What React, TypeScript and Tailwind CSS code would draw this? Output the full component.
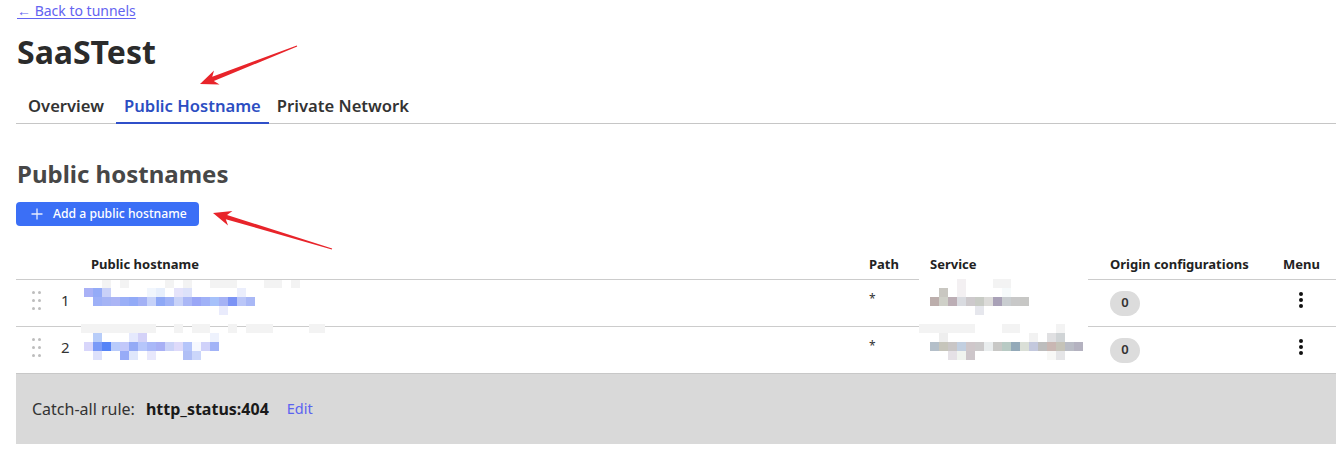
import React from "react";

type Cell = [number, number, number, number, string];

const FAINT = "#f3f3f3";

function cells(level: number, y0: number, h: number, xOff: number, list: [number, string][]): Cell[] {
  return list.map(([c, col]) => [xOff + c * 9, y0, 9, h, col]);
}

const host1: Cell[] = [
  ...cells(0, 0, 8, 0, [[2, FAINT], [4, FAINT], [9, FAINT], [11, FAINT], [14, FAINT], [15, FAINT], [16, FAINT], [20, FAINT], [21, FAINT], [23, FAINT]]),
  ...cells(1, 8, 9, 0, [[0, "#a9b1f6"], [1, "#94abf7"], [2, "#c9d1f8"], [7, "#f1f6fd"], [8, "#e7effc"], [10, "#e5e3fa"], [11, "#dde2fa"], [17, "#ebeefc"]]),
  ...cells(2, 17, 9, 0, [
    [1, "#9db0f7"], [2, "#a5b4f5"], [3, "#abb5f5"], [4, "#9aaff7"], [5, "#92aaf7"], [6, "#a3b1f5"], [7, "#c6d2f9"], [8, "#8ea8f6"], [9, "#a0b3f6"],
    [10, "#c8d2f8"], [11, "#aab7f6"], [12, "#99a6f6"], [13, "#a0b1f7"], [14, "#a6c1fa"], [15, "#a5b2f5"], [16, "#7b93f5"], [17, "#bac6f8"], [18, "#a9b8f6"],
  ]),
  ...cells(3, 26, 9, 0, [[15, "#e9ebfc"]]),
];

const host2: Cell[] = [
  [0, 0, 75, 9, FAINT], [93, 0, 9, 9, FAINT], [111, 0, 18, 9, FAINT], [147, 0, 9, 9, FAINT], [165, 0, 27, 9, FAINT], [228, 0, 16, 9, FAINT],
  ...cells(1, 9, 9, 3, [[1, "#b8cdf9"], [5, "#e5e9fd"], [6, "#d4d2f8"], [14, "#eef2fd"]]),
  ...cells(2, 18, 9, 3, [
    [0, "#d8d6fb"], [1, "#7a9af8"], [2, "#5684f7"], [3, "#b8cbfb"], [4, "#c2c8fa"], [5, "#94aaf6"], [6, "#b6c6fb"], [7, "#a9b8f8"],
    [8, "#a8b0f5"], [9, "#cbd3f8"], [10, "#dedafa"], [11, "#b5c5fa"], [12, "#f6f8fe"], [13, "#d0d2fa"], [14, "#a2b3f7"],
  ]),
  ...cells(3, 27, 9, 3, [[1, "#dde1fb"], [4, "#97abf7"], [5, "#dfe7fc"], [7, "#e8e8fc"], [11, "#b0bff6"], [12, "#cbd6fa"]]),
];

const serv1: Cell[] = [
  [0, 0, 169, 4, "#ffffff"],
  ...cells(0, 1, 9, 11, [[3, "#f3f0f2"], [7, FAINT], [8, FAINT]]),
  ...cells(1, 10, 9, 11, [[1, "#c9c7c1"], [3, "#f3f0f2"], [8, "#f6fafb"]]),
  ...cells(2, 19, 9, 11, [
    [0, "#bcaeac"], [1, "#cfd0c8"], [2, "#bcaeb5"], [3, "#d9dbe0"], [4, "#cdc9cc"], [5, "#c8cbc5"], [6, "#dcdbd9"], [7, "#a9a1b7"], [8, "#c9cdd0"], [9, "#c8c8c8"], [10, "#c7c7c5"],
  ]),
  ...cells(3, 28, 9, 11, [[5, "#e6e7ed"]]),
];

const serv2: Cell[] = [
  [0, 0, 169, 4, "#ffffff"],
  [0, 0, 56, 9, FAINT],
  ...cells(0, 0, 9, 11, [[8, FAINT], [9, FAINT], [14, FAINT]]),
  ...cells(1, 9, 9, 11, [[1, "#eeeeee"], [11, "#f2f2f2"], [13, "#e0e0e2"], [14, "#d0d4d6"]]),
  ...cells(2, 18, 9, 11, [
    [0, "#b4bfc9"], [1, "#c6c5bb"], [2, "#c9c6c6"], [3, "#c2cfe0"], [4, "#cfc7ca"], [5, "#cccacb"], [6, "#e9edee"], [7, "#c8c8c6"], [8, "#b8cac4"],
    [9, "#93a9b8"], [10, "#dadfd7"], [11, "#c3c8dd"], [12, "#bdbdbd"], [13, "#c9b7b3"], [14, "#c5c3b8"], [15, "#b9bcc5"], [16, "#b4b2c0"],
  ]),
  ...cells(3, 27, 9, 11, [[2, "#e5e1e6"], [3, "#f0f4ef"], [4, "#cdc6ca"], [13, "#f8f8f6"], [14, "#e5e5e7"]]),
];

function Mosaic({ data, w, h, className }: { data: Cell[]; w: number; h: number; className: string }) {
  return (
    <svg width={w} height={h} viewBox={`0 0 ${w} ${h}`} className={className} shapeRendering="crispEdges">
      {data.map(([x, y, cw, ch, c], i) => (
        <rect key={i} x={x} y={y} width={cw} height={ch} fill={c} />
      ))}
    </svg>
  );
}

function Arrow({ sx, sy, tx, ty }: { sx: number; sy: number; tx: number; ty: number }) {
  const dx = tx - sx;
  const dy = ty - sy;
  const len = Math.hypot(dx, dy);
  const ux = dx / len;
  const uy = dy / len;
  const nx = -uy;
  const ny = ux;
  const L = 18;
  const W = 7.5;
  const hx = tx - ux * L;
  const hy = ty - uy * L;
  const bx = tx - ux * (L - 4);
  const by = ty - uy * (L - 4);
  const pts = [
    [sx + nx * 0.6, sy + ny * 0.6],
    [bx + nx * 2.2, by + ny * 2.2],
    [hx + nx * W, hy + ny * W],
    [tx, ty],
    [hx - nx * W, hy - ny * W],
    [bx - nx * 2.2, by - ny * 2.2],
    [sx - nx * 0.6, sy - ny * 0.6],
  ]
    .map((p) => p.join(","))
    .join(" ");
  return <polygon points={pts} fill="#e8242a" />;
}

function Handle() {
  return (
    <div className="grid grid-cols-2 gap-x-[3px] gap-y-[5px] w-[9px] mb-[6px]">
      {Array.from({ length: 6 }).map((_, i) => (
        <div key={i} className="w-[3px] h-[3px] rounded-full bg-[#bdbdbd]" />
      ))}
    </div>
  );
}

function Kebab() {
  return (
    <div className="flex flex-col gap-[2.3px] mb-[6px]">
      <div className="w-[4px] h-[4px] rounded-full bg-[#111]" />
      <div className="w-[4px] h-[4px] rounded-full bg-[#111]" />
      <div className="w-[4px] h-[4px] rounded-full bg-[#111]" />
    </div>
  );
}

function Badge() {
  return (
    <div className="w-[30px] h-[25px] rounded-full bg-[#dcdcdc] flex items-center justify-center text-[13px] font-semibold text-[#333]">
      0
    </div>
  );
}

const grid = "grid grid-cols-[44px_24px_785px_61px_180px_173px_1fr]";

export default function App() {
  return (
    <div
      className="relative w-[1340px] h-[450px] bg-white overflow-hidden"
      style={{ fontFamily: '"Noto Sans", "Open Sans", sans-serif' }}
    >
      <div className="pl-[16px] pr-[4px]">
        <a href="#" className="block mt-[1px] text-[14px] leading-[20px] text-[#6363f1] underline underline-offset-[2px] pl-[1px] w-fit">
          ← Back to tunnels
        </a>
        <h1 className="mt-[11px] text-[32px] leading-[40px] font-bold text-[#2b2b2b] pl-[1px]">SaaSTest</h1>

        <div className="mt-[21px] flex border-b border-[#c6c6c6] pl-[4px]">
          <div className="px-[8px] pt-[1px] pb-[5px] text-[16.6px] leading-[24px] font-semibold text-[#333]">Overview</div>
          <div className="ml-[4px] px-[8px] pt-[1px] pb-[3px] mb-[-1px] border-b-2 border-[#2f4fc9] text-[16.6px] leading-[24px] font-semibold text-[#2c4ec2]">
            Public Hostname
          </div>
          <div className="px-[8px] pt-[1px] pb-[5px] text-[16.6px] leading-[24px] font-semibold text-[#333]">Private Network</div>
        </div>

        <h2 className="mt-[34px] text-[24px] leading-[32px] font-bold text-[#474747] pl-[1px]">Public hostnames</h2>

        <button className="mt-[12px] h-[24px] w-[183px] rounded-[4px] bg-[#3b6ff6] flex items-center pl-[15px] text-white text-[12.2px] font-medium">
          <svg width="12" height="12" viewBox="0 0 12 12" className="mr-[10px]">
            <path d="M6 0.5V11.5M0.5 6H11.5" stroke="#e6ecff" strokeWidth="1.3" />
          </svg>
          Add a public hostname
        </button>

        <div className="mt-[24px]">
          <div className={`${grid} h-[30px] items-center border-b border-[#cccccc] text-[13px] font-bold text-[#222]`}>
            <div />
            <div />
            <div className="pl-[7px]">Public hostname</div>
            <div>Path</div>
            <div>Service</div>
            <div>Origin configurations</div>
            <div>Menu</div>
          </div>

          <div className={`${grid} h-[47px] items-center border-b border-[#cccccc]`}>
            <div className="pl-[16px]"><Handle /></div>
            <div className="pl-[1px] text-[15px] text-[#333] mb-[6px]">1</div>
            <div className="self-start">
              <Mosaic data={host1} w={230} h={36} className="relative" />
            </div>
            <div className="text-[12px] text-[#333] mb-[8px]">*</div>
            <div className="self-start ml-[-11px] mt-[-2px]">
              <Mosaic data={serv1} w={169} h={38} className="relative" />
            </div>
            <div><Badge /></div>
            <div className="pl-[16px]"><Kebab /></div>
          </div>

          <div className={`${grid} h-[47px] items-center border-b border-[#c8c8c8]`}>
            <div className="pl-[16px]"><Handle /></div>
            <div className="pl-[1px] text-[15px] text-[#333] mb-[6px]">2</div>
            <div className="self-start ml-[-3px] mt-[-3px]">
              <Mosaic data={host2} w={250} h={36} className="relative" />
            </div>
            <div className="text-[12px] text-[#333] mb-[8px]">*</div>
            <div className="self-start ml-[-11px] mt-[-3px]">
              <Mosaic data={serv2} w={169} h={36} className="relative" />
            </div>
            <div><Badge /></div>
            <div className="pl-[16px]"><Kebab /></div>
          </div>

          <div className="h-[70px] bg-[#d9d9d9] flex items-center pl-[16px] text-[16px] text-[#333]">
            <span>Catch-all rule:</span>
            <span className="ml-[11px] font-bold text-[#1a1a1a]">http_status:404</span>
            <span className="ml-[18px] text-[14.5px] text-[#5b63f0]">Edit</span>
          </div>
        </div>
      </div>

      <svg className="absolute left-0 top-0 pointer-events-none" width="1340" height="450">
        <Arrow sx={297} sy={46} tx={200} ty={84} />
        <Arrow sx={332} sy={249} tx={213} ty={213} />
      </svg>
    </div>
  );
}
